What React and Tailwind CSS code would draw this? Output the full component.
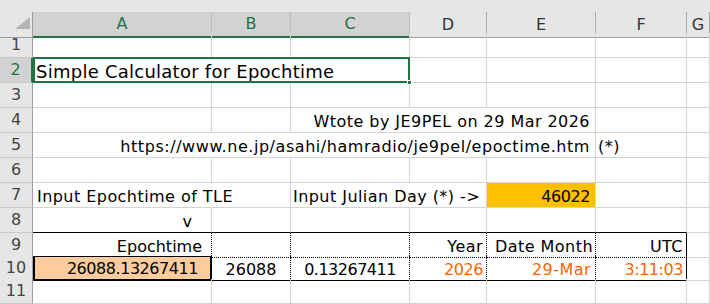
import { twMerge } from "tailwind-merge";

// column widths: row header, A..G
const GRID = "grid grid-cols-[33px_179px_79px_119px_77px_109px_91px_23px]";

const cellBase =
  "flex items-end h-full min-w-0 whitespace-nowrap px-[3px] pb-[2px] leading-[16px] border-r border-b border-[#d4d4d4]";

function Cell({ className, children }) {
  return <div className={twMerge(cellBase, className)}>{children}</div>;
}

function RowHead({ n, active }) {
  return (
    <div
      className={
        active
          ? "flex items-center justify-center h-full bg-[#d2d2d2] text-[#217346] border-b border-b-[#c8c8c8] border-r-2 border-r-[#217346]"
          : "flex items-center justify-center h-full bg-[#e6e6e6] text-[#444] border-b border-b-[#c8c8c8] border-r border-r-[#9e9e9e]"
      }
    >
      {n}
    </div>
  );
}

function Row({ n, tall = true, active, children }) {
  return (
    <div className={twMerge(GRID, tall ? "h-[25px]" : "h-[23px]")}>
      <RowHead n={n} active={active} />
      {children}
    </div>
  );
}

function ColHead({ label, active }) {
  return (
    <div
      className={
        active
          ? "flex items-center justify-center bg-[#d2d2d2] text-[#217346] border-r border-r-[#bdbdbd] border-b-2 border-b-[#217346]"
          : "flex items-center justify-center bg-[#e6e6e6] text-[#333] border-r border-r-[#ababab] border-b border-b-[#9e9e9e]"
      }
    >
      {label}
    </div>
  );
}

function Empty({ count }) {
  return Array.from({ length: count }, (_, i) => <Cell key={i} />);
}

export default function App() {
  return (
    <div className="w-[710px] h-[304px] overflow-hidden bg-white text-[16px] text-black font-['DejaVu_Sans',sans-serif]">
      {/* column headers */}
      <div className="h-[12px] bg-[#e6e6e6]" />
      <div className={twMerge(GRID, "h-[21px]")}>
        <div className="relative bg-[#e6e6e6] border-r border-b border-[#9e9e9e]">
          <svg className="absolute left-[15px] top-[5px]" width="15" height="12" viewBox="0 0 15 12">
            <polygon points="15,0 15,12 0,12" fill="#b4b4b4" />
          </svg>
        </div>
        <ColHead label="A" active />
        <ColHead label="B" active />
        <ColHead label="C" active />
        <ColHead label="D" />
        <ColHead label="E" />
        <ColHead label="F" />
        <ColHead label="G" />
      </div>

      <Row n={1}>
        <Empty count={7} />
      </Row>

      <Row n={2} active>
        <Cell className="col-span-3 relative text-[18px] leading-[18px] tracking-[0.25px] pl-[3px] pb-[1px]">
          Simple Calculator for Epochtime
          <div className="absolute -top-[1px] left-0 -right-[1px] -bottom-[1px] border-2 border-[#217346]" />
          <div className="absolute -right-[3px] -bottom-[3px] w-[5px] h-[5px] bg-[#217346] border border-white" />
        </Cell>
        <Empty count={4} />
      </Row>

      <Row n={3}>
        <Empty count={7} />
      </Row>

      <Row n={4}>
        <Cell />
        <Cell />
        <Cell className="col-span-3 justify-end pr-[5px] tracking-[0.45px]">
          Wtote by JE9PEL on 29 Mar 2026
        </Cell>
        <Empty count={2} />
      </Row>

      <Row n={5}>
        <Cell className="col-span-5 justify-end pr-[5px] tracking-[0.55px]">
          https://www.ne.jp/asahi/hamradio/je9pel/epoctime.htm
        </Cell>
        <Cell className="pl-[2px] tracking-[0.45px]">(*)</Cell>
        <Cell />
      </Row>

      <Row n={6}>
        <Empty count={7} />
      </Row>

      <Row n={7}>
        <Cell className="col-span-2 pl-[4px] tracking-[0.45px]">Input Epochtime of TLE</Cell>
        <Cell className="col-span-2 pl-[2px] tracking-[0.45px]">Input Julian Day (*) -&gt;</Cell>
        <Cell className="justify-end pr-[5px] bg-[#ffc000] tracking-[-0.45px]">46022</Cell>
        <Empty count={2} />
      </Row>

      <Row n={8}>
        <Cell className="justify-end pr-[19px] border-b-black">v</Cell>
        <Cell className="border-b-black" />
        <Cell className="border-b-black" />
        <Cell className="border-b-black" />
        <Cell className="border-b-black" />
        <Cell className="border-b-black" />
        <Cell />
      </Row>

      <Row n={9} tall={false}>
        <Cell className="justify-end pr-[9px] border-black [border-right-style:dotted]">Epochtime</Cell>
        <Cell className="border-black border-dotted" />
        <Cell className="border-black border-dotted" />
        <Cell className="justify-end pr-[3px] border-black border-dotted tracking-[0.45px]">Year</Cell>
        <Cell className="justify-end pr-[2px] border-black border-dotted tracking-[0.45px]">Date Month</Cell>
        <Cell className="justify-end pr-[3px] border-black [border-bottom-style:dotted] tracking-[0.45px]">UTC</Cell>
        <Cell />
      </Row>

      <Row n={10} tall={false} >
        <Cell className="justify-end pr-[12px] bg-[#fccc9c] border-black border-t border-l-2 border-r-2 border-b-2 tracking-[-0.45px]">
          26088.13267411
        </Cell>
        <Cell className="justify-center border-black [border-right-style:dotted]">26088</Cell>
        <Cell className="justify-center border-black [border-right-style:dotted] tracking-[-0.5px]">0.13267411</Cell>
        <Cell className="justify-end pr-[3px] text-[#ff6600] border-black [border-right-style:dotted] tracking-[-0.45px]">2026</Cell>
        <Cell className="justify-end pr-[4px] text-[#ff6600] border-black [border-right-style:dotted] tracking-[0.45px]">29-Mar</Cell>
        <Cell className="justify-end pr-[3px] text-[#ff6600] border-black tracking-[-0.45px]">3:11:03</Cell>
        <Cell />
      </Row>

      <Row n={11}>
        <Empty count={7} />
      </Row>
    </div>
  );
}
